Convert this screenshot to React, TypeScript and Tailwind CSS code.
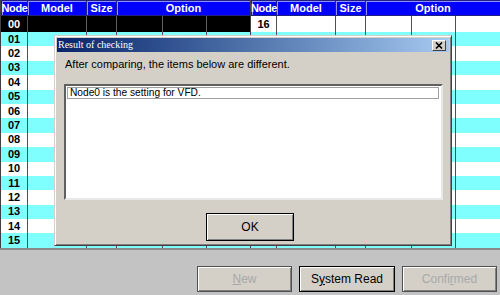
import clsx from "clsx";

const LEFT_COLS = "grid-cols-[27px_59px_30px_46px_44px_44px]";
const RIGHT_COLS = "grid-cols-[26px_59px_30px_46px_44px_45px]";

function NodeTable({
  first,
  cols,
  selectFirst,
  labelCount = 16,
}: {
  first: number;
  cols: string;
  selectFirst?: boolean;
  labelCount?: number;
}) {
  const rows = Array.from({ length: 16 }, (_, i) => String(first + i).padStart(2, "0"));
  return (
    <div className="w-[250px] border-l border-[#404040]">
      <div className={clsx("grid h-[16px] bg-[#0000ff] text-white font-bold text-[11px] leading-none", cols)}>
        <div className="flex items-center justify-center border border-[#202080] shadow-[inset_1px_1px_#9090ff] tracking-[-0.4px]">
          Node
        </div>
        <div className="flex items-center justify-center border-y border-r border-[#202080] shadow-[inset_1px_1px_#9090ff]">
          Model
        </div>
        <div className="flex items-center justify-center border-y border-r border-[#202080] shadow-[inset_1px_1px_#9090ff]">
          Size
        </div>
        <div className="col-span-3 flex items-center justify-center border-y border-r border-[#202080] shadow-[inset_1px_1px_#9090ff]">
          Option
        </div>
      </div>
      {rows.map((n, i) => {
        const selected = selectFirst && i === 0;
        return (
          <div
            key={n}
            className={clsx(
              "grid",
              cols,
              i === 0 ? "h-[16px]" : "h-[14.4px]",
              selected ? "bg-black text-white" : i % 2 === 1 ? "bg-[#80ffff] text-black" : "bg-white text-black"
            )}
          >
            <div className="flex items-center justify-center font-bold text-[11px] leading-none border-r border-[#505050]">
              {i < labelCount ? n : null}
            </div>
            {[0, 1, 2, 3, 4].map((c) => (
              <div key={c} className={clsx("border-r", selected ? "border-[#606060]" : "border-[#505050]")} />
            ))}
          </div>
        );
      })}
    </div>
  );
}

function WinButton({
  children,
  disabled,
  isDefault,
  className,
}: {
  children: React.ReactNode;
  disabled?: boolean;
  isDefault?: boolean;
  className?: string;
}) {
  return (
    <div
      className={clsx(
        "flex items-center justify-center bg-[#d4d0c8] text-[12px] border",
        isDefault ? "border-black" : "border-[#505050]",
        "shadow-[inset_1px_1px_#ffffff,inset_-1px_-1px_#808080]",
        disabled ? "text-[#a8a8a8]" : "text-black",
        className
      )}
    >
      {children}
    </div>
  );
}

export default function App() {
  return (
    <div className="relative w-[500px] h-[295px] overflow-hidden bg-[#c3c3c3] font-['Liberation_Sans',Arial,sans-serif]">
      <div className="flex border-b-2 border-[#8a8a8a]">
        <NodeTable first={0} cols={LEFT_COLS} selectFirst />
        {/* rows 17+ sit under the dialog */}
        <NodeTable first={16} cols={RIGHT_COLS} labelCount={1} />
      </div>

      <div className="flex justify-end gap-[7px] pr-[3px] pt-[16px]">
        <WinButton disabled className="w-[95px] h-[26px]">
          <span>
            <span className="underline">N</span>ew
          </span>
        </WinButton>
        <WinButton isDefault className="w-[96px] h-[26px]">
          <span>
            S<span className="underline">y</span>stem Read
          </span>
        </WinButton>
        <WinButton disabled className="w-[95px] h-[26px]">
          <span>
            Confi<span className="underline">r</span>med
          </span>
        </WinButton>
      </div>

      {/* modal dialog */}
      <div className="absolute left-[54px] top-[35px] w-[398px] h-[211px] bg-[#d4d0c8] border border-t-[#d4d0c8] border-l-[#d4d0c8] border-r-[#404040] border-b-[#404040] shadow-[inset_1px_1px_#ffffff,inset_-1px_-1px_#808080] p-[2px] flex flex-col">
        <div className="h-[14px] flex items-center justify-between bg-gradient-to-r from-[#0a246a] to-[#a6caf0] pl-[1px] pr-[3px]">
          <span className="font-['Liberation_Serif',serif] text-[10px] text-white leading-none">Result of checking</span>
          <div className="w-[14px] h-[11px] bg-[#d4d0c8] border border-t-white border-l-white border-r-[#404040] border-b-[#404040] flex items-center justify-center">
            <svg width="8" height="7" viewBox="0 0 8 7">
              <path d="M1 0.5 L7 6.5 M7 0.5 L1 6.5" stroke="#000" strokeWidth="1.6" />
            </svg>
          </div>
        </div>
        <div className="pl-[8px] pt-[5px] text-[11px] text-black leading-[14px]">
          After comparing, the items below are different.
        </div>
        <div className="mt-[13px] ml-[7px] w-[379px] h-[116px] bg-white border-2 border-t-[#606060] border-l-[#606060] border-r-[#e8e8e8] border-b-[#e8e8e8] p-[1px]">
          <div className="h-[12px] w-[372px] border border-[#a0a0a0] flex items-center pl-[2px] text-[10.2px] leading-none text-black">
            Node0 is the setting for VFD.
          </div>
        </div>
        <div className="flex justify-center mt-[13px] pr-[6px]">
          <WinButton isDefault className="w-[88px] h-[28px]">
            OK
          </WinButton>
        </div>
      </div>
    </div>
  );
}
